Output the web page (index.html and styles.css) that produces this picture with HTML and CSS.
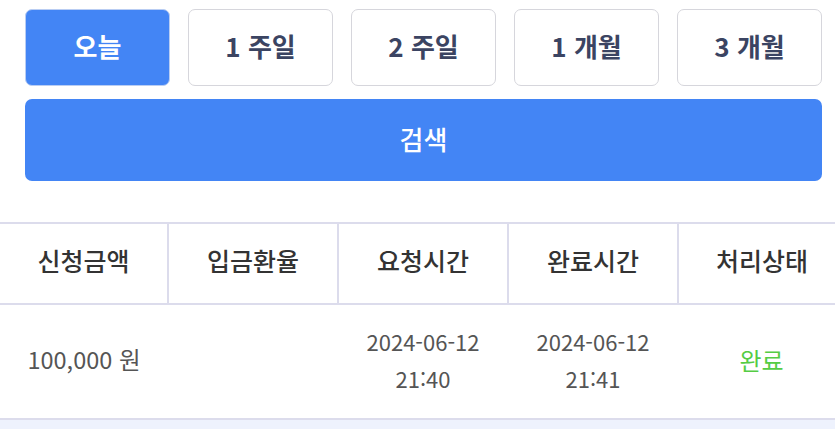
FILE: index.html
```html
<!DOCTYPE html>
<html lang="ko">
<head>
  <meta charset="UTF-8">
  <meta name="viewport" content="width=device-width, initial-scale=1.0">
  <title>입금내역</title>
  <link rel="stylesheet" href="styles.css">
</head>
<body>
  <div class="filter">
    <div class="period-row">
      <button class="period-btn active">오늘</button>
      <button class="period-btn">1 주일</button>
      <button class="period-btn">2 주일</button>
      <button class="period-btn">1 개월</button>
      <button class="period-btn">3 개월</button>
    </div>
    <button class="search-btn">검색</button>
  </div>

  <table class="history">
    <thead>
      <tr>
        <th>신청금액</th>
        <th>입금환율</th>
        <th>요청시간</th>
        <th>완료시간</th>
        <th>처리상태</th>
      </tr>
    </thead>
    <tbody>
      <tr>
        <td class="amount">100,000 원</td>
        <td></td>
        <td>2024-06-12<br>21:40</td>
        <td>2024-06-12<br>21:41</td>
        <td class="done">완료</td>
      </tr>
    </tbody>
  </table>
  <div class="band"></div>
</body>
</html>
```

FILE: styles.css
```css
* { box-sizing: border-box; margin: 0; padding: 0; }
body {
  background: #fff;
  font-family: "Noto Sans CJK KR", "Noto Sans", sans-serif;
  color: #333;
  width: 835px;
  overflow: hidden;
}
.filter {
  padding: 9px 13px 0 25px;
}
.period-row {
  display: flex;
  gap: 18px;
}
.period-btn {
  flex: 1;
  height: 77px;
  padding-bottom: 4px;
  background: #fff;
  border: 1.5px solid #d6d6dc;
  border-radius: 7px;
  font-family: inherit;
  font-size: 26px;
  font-weight: 700;
  color: #3b4462;
}
.period-btn.active {
  background: #4385f5;
  border-color: #b9cdf3;
  color: #fff;
}
.search-btn {
  display: block;
  width: 100%;
  height: 82px;
  margin-top: 13px;
  padding-bottom: 4px;
  background: #4385f5;
  border: none;
  border-radius: 7px;
  font-family: inherit;
  font-size: 26px;
  font-weight: 500;
  color: #fff;
}
.history {
  margin-top: 41px;
  width: 845px;
  border-collapse: collapse;
  table-layout: fixed;
}
.history th {
  height: 81px;
  padding-bottom: 8px;
  font-size: 25px;
  font-weight: 500;
  color: #333;
  border-top: 2px solid #dcdcec;
  border-bottom: 2px solid #dcdcec;
  border-left: 2px solid #dcdcec;
}
.history th:first-child { border-left: none; }
.history th:nth-child(1) { width: 168px; }
.history th:nth-child(2),
.history th:nth-child(3),
.history th:nth-child(4) { width: 170px; }
.history td {
  height: 115px;
  padding-bottom: 4px;
  text-align: center;
  font-size: 22px;
  line-height: 37px;
  color: #555;
  border-bottom: 2px solid #dcdcec;
}
.history td.amount {
  font-size: 23.5px;
}
.history td.done {
  font-size: 24px;
  color: #55cc44;
  font-weight: 400;
}
.band {
  height: 20px;
  background: #eef2fd;
}
```
